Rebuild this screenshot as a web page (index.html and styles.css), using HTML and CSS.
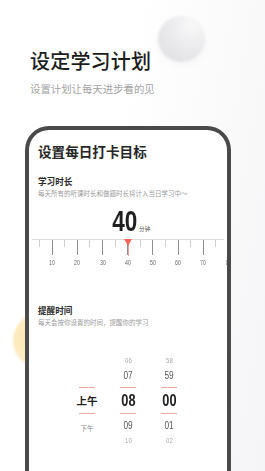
FILE: index.html
```html
<!DOCTYPE html>
<html lang="zh-CN">
<head>
  <meta charset="UTF-8">
  <meta name="viewport" content="width=device-width, initial-scale=1.0">
  <title>设定学习计划</title>
  <link rel="stylesheet" href="styles.css">
</head>

<body>
  <div class="ball ball-gray"></div>
  <div class="ball ball-yellow"></div>

  <header class="intro">
    <h1>设定学习计划</h1>
    <p>设置计划让每天进步看的见</p>
  </header>

  <section class="phone">
    <h2>设置每日打卡目标</h2>

    <h3>学习时长</h3>
    <p class="hint">每天所有的听课时长和做题时长将计入当日学习中～</p>

    <div class="value">
      <span class="num">40</span><span class="unit">分钟</span>
    </div>

    <div class="ruler">
      <div class="ticks">
        <div class="tick"><i></i></div>
        <div class="tick major"><i></i><span class="num">10</span></div>
        <div class="tick"><i></i></div>
        <div class="tick major"><i></i><span class="num">20</span></div>
        <div class="tick"><i></i></div>
        <div class="tick major"><i></i><span class="num">30</span></div>
        <div class="tick"><i></i></div>
        <div class="tick major"><i></i><span class="num">40</span></div>
        <div class="tick"><i></i></div>
        <div class="tick major"><i></i><span class="num">50</span></div>
        <div class="tick"><i></i></div>
        <div class="tick major"><i></i><span class="num">60</span></div>
        <div class="tick"><i></i></div>
        <div class="tick major"><i></i><span class="num">70</span></div>
        <div class="tick"><i></i></div>
        <div class="tick major"><i></i><span class="num">80</span></div>
      </div>
      <div class="pointer"></div>
    </div>

    <h3 class="remind">提醒时间</h3>
    <p class="hint">每天会按你设置的时间，提醒你的学习</p>

    <div class="picker">
      <div class="col">
        <div class="cell far"></div>
        <div class="cell near"></div>
        <div class="cell sel cjk">上午</div>
        <div class="cell near pm">下午</div>
        <div class="cell far"></div>
      </div>
      <div class="col">
        <div class="cell far"><span class="num">06</span></div>
        <div class="cell near"><span class="num">07</span></div>
        <div class="cell sel"><span class="num">08</span></div>
        <div class="cell near"><span class="num">09</span></div>
        <div class="cell far"><span class="num">10</span></div>
      </div>
      <div class="col">
        <div class="cell far"><span class="num">58</span></div>
        <div class="cell near"><span class="num">59</span></div>
        <div class="cell sel"><span class="num">00</span></div>
        <div class="cell near"><span class="num">01</span></div>
        <div class="cell far"><span class="num">02</span></div>
      </div>
    </div>
  </section>
</body>
</html>
```

FILE: styles.css
```css
* {
  box-sizing: border-box;
}

body {
  margin: 0;
  width: 265px;
  height: 471px;
  overflow: hidden;
  position: relative;
  font-family: "Noto Sans CJK SC", sans-serif;
  background: linear-gradient(100deg, #ffffff 40%, #f5f5f7 100%);
}

h1, h2, h3, p {
  margin: 0;
}

/* Deko-Kugeln */
.ball {
  position: absolute;
  border-radius: 50%;
}
.ball-gray {
  left: 158px;
  top: 16px;
  width: 47px;
  height: 46px;
  background: radial-gradient(circle at 72% 20%, #f8f8f9 0%, #ebebed 45%, #dcdde0 100%);
  filter: blur(1px);
  box-shadow: 0 4px 10px rgba(0, 0, 0, 0.03);
}
.ball-yellow {
  left: 13px;
  top: 313px;
  width: 54px;
  height: 55px;
  background: radial-gradient(circle at 30% 40%, #fde7b4 0%, #fdeec9 60%, #fff6e4 100%);
  filter: blur(0.8px);
}

.intro {
  padding: 49px 0 0 30px;
  position: relative;
}
.intro h1 {
  font-size: 20px;
  line-height: 24px;
  font-weight: 500;
  color: #1c1c1c;
  letter-spacing: 0.2px;
}
.intro p {
  margin-top: 9px;
  font-size: 10.4px;
  line-height: 14px;
  color: #a3a3a3;
}

/* Telefonrahmen */
.phone {
  position: relative;
  margin: 30px 0 0 25px;
  width: 206px;
  height: 345px;
  border: 4px solid #4a4a4a;
  border-bottom: none;
  border-radius: 24px 24px 0 0;
  background: #fff;
  overflow: hidden;
  padding: 12px 0 0 9px;
}

.phone h2 {
  font-size: 13.6px;
  line-height: 18px;
  font-weight: 700;
  color: #262626;
}
.phone h3 {
  margin-top: 15px;
  font-size: 8.6px;
  line-height: 12px;
  font-weight: 700;
  color: #2a2a2a;
}
.phone h3.remind {
  margin-top: 36px;
}
.hint {
  margin-top: 2px;
  font-size: 6.5px;
  line-height: 9px;
  color: #9b9b9b;
}

.num {
  display: inline-block;
  font-family: "Liberation Sans Narrow", "Liberation Sans", sans-serif;
  transform: scaleX(0.75);
}

.value {
  margin: 8px 0 0 -9px;
  height: 30px;
  display: flex;
  justify-content: center;
  align-items: baseline;
  line-height: 30px;
}
.value .num {
  font-size: 30px;
  font-weight: 700;
  color: #1f1f1f;
  margin: 0 -3px 0 2px;
}
.value .unit {
  font-size: 5.6px;
  color: #555;
  margin-left: 1px;
}

/* Lineal */
.ruler {
  position: relative;
  margin: 3px 0 0 -9px;
  height: 29px;
}
.ruler::before {
  content: "";
  position: absolute;
  left: 3px;
  right: 3px;
  top: 0;
  height: 1px;
  background: #dcdcdc;
}
.ticks {
  display: flex;
  padding-left: 4.3px;
  padding-top: 1px;
}
.tick {
  flex: 0 0 12.6px;
  display: flex;
  flex-direction: column;
  align-items: center;
}
.tick i {
  display: block;
  width: 1px;
  height: 7px;
  background: #cfcfcf;
}
.tick.major i {
  height: 15px;
  background: #8f8f8f;
}
.tick .num {
  margin-top: 4px;
  font-size: 7px;
  line-height: 8px;
  color: #666;
}
.pointer {
  position: absolute;
  left: 98.5px;
  top: 0;
  width: 1.5px;
  height: 17px;
  background: #f1a29a;
}
.pointer::before {
  content: "";
  position: absolute;
  left: -3.5px;
  top: 0;
  border-left: 4.2px solid transparent;
  border-right: 4.2px solid transparent;
  border-top: 7px solid #f3685a;
}

/* Zeitauswahl */
.picker {
  margin: 26px 0 0 -9px;
  display: flex;
  justify-content: center;
}
.col {
  width: 41px;
  display: flex;
  flex-direction: column;
  align-items: center;
}
.cell {
  height: 15px;
  line-height: 15px;
  display: flex;
  justify-content: center;
  align-items: center;
  white-space: nowrap;
}
.cell.far {
  font-size: 8px;
  color: #a8a8a8;
}
.cell.near {
  font-size: 11px;
  color: #555;
}
.cell.sel {
  width: 16px;
  height: 27px;
  margin: 4px 0;
  border-top: 1px solid #eaa89f;
  border-bottom: 1px solid #eaa89f;
  font-size: 17px;
  font-weight: 700;
  color: #202020;
}
.cell.sel.cjk {
  font-family: "Noto Sans CJK SC", sans-serif;
  font-size: 10.5px;
}
.cell.pm {
  font-size: 6.5px;
  color: #8a8a8a;
  padding-top: 6px;
}
```
